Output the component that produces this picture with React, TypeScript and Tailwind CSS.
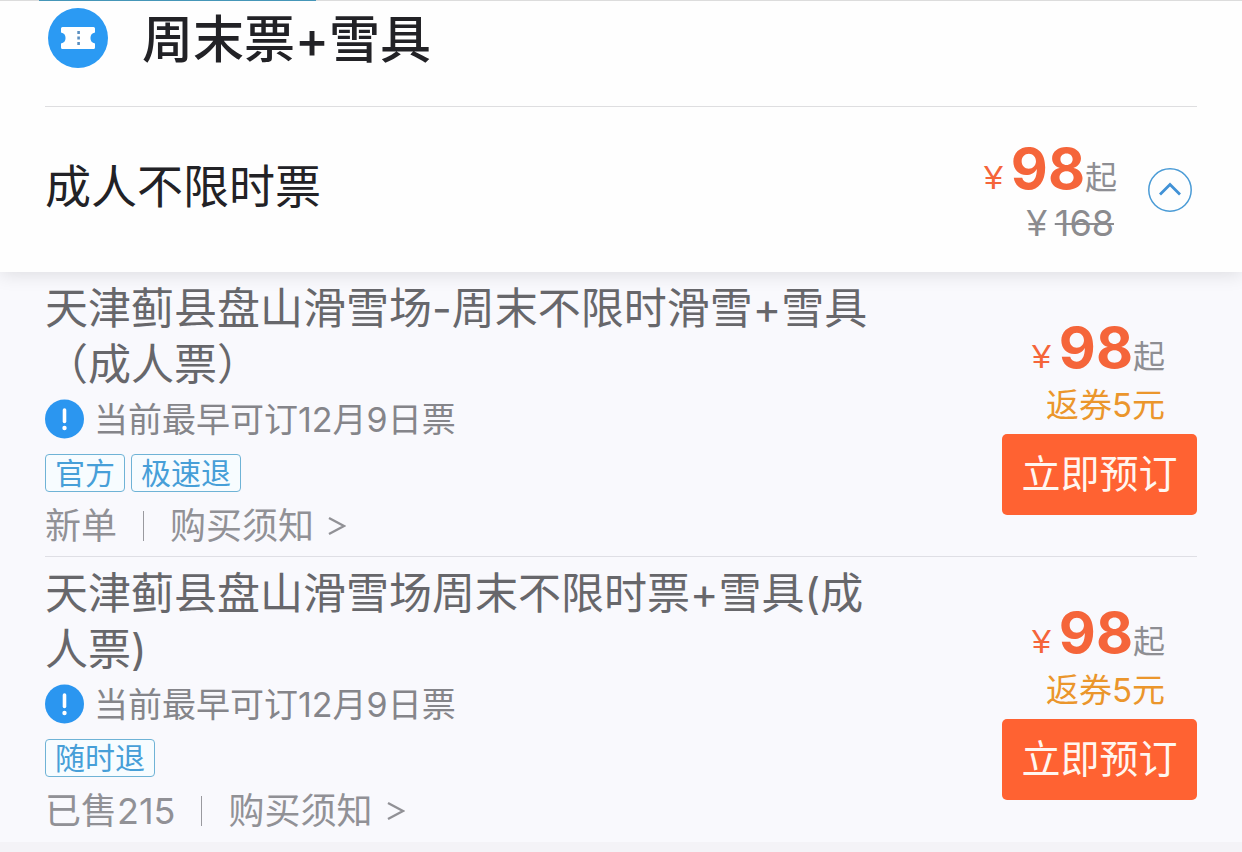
import React from "react";

type Offer = {
  title: string;
  tags: string[];
  status: string;
};

const offers: Offer[] = [
  {
    title: "天津蓟县盘山滑雪场-周末不限时滑雪+雪具（成人票）",
    tags: ["官方", "极速退"],
    status: "新单",
  },
  {
    title: "天津蓟县盘山滑雪场周末不限时票+雪具(成人票)",
    tags: ["随时退"],
    status: "已售215",
  },
];

function TicketIcon() {
  return (
    <svg viewBox="0 0 60 60" className="size-[60px] shrink-0" aria-hidden="true">
      <circle cx="30" cy="30" r="30" fill="#2b9af3" />
      <path
        d="M14.500 19H45.500Q47 19 47 20.500V24.500A5.600 5.600 0 0 0 47 35.500V39.500Q47 41 45.500 41H14.500Q13 41 13 39.500V35.500A5.600 5.600 0 0 0 13 24.500V20.500Q13 19 14.500 19Z"
        fill="#fff"
      />
      <g fill="#5b8fc0">
        <rect x="29.300" y="23" width="2.600" height="3" />
        <rect x="29.300" y="28.500" width="2.600" height="3" />
        <rect x="29.300" y="34" width="2.600" height="3" />
      </g>
    </svg>
  );
}

function InfoIcon() {
  return (
    <svg viewBox="0 0 40 40" className="size-10 shrink-0" aria-hidden="true">
      <circle cx="19.500" cy="20" r="19.500" fill="#2b96f0" />
      <path d="M19.500 11V22.500" stroke="#fff" strokeWidth="3.600" strokeLinecap="round" />
      <circle cx="19.500" cy="29" r="2.200" fill="#fff" />
    </svg>
  );
}

function Price({ amount }: { amount: number }) {
  return (
    <p className="flex h-14 items-baseline justify-end leading-[56px] text-[#f5653a]">
      <span className="mr-2 font-['Liberation_Sans',sans-serif] text-[34px]">¥</span>
      <strong className="text-[57px] font-bold">{amount}</strong>
      <span className="text-[32px] text-[#8e8e93]">起</span>
    </p>
  );
}

function OfferCard({ offer }: { offer: Offer }) {
  return (
    <li className="flex justify-between border-b border-[#dfdfe5] pt-2 pb-1 last:border-transparent">
      <div className="min-w-0 max-w-[850px]">
        <h3 className="text-[43px] leading-[56px] text-[#67676b]">{offer.title}</h3>
        <p className="flex h-[54px] items-center gap-[9px] text-[34px] text-[#85858a]">
          <InfoIcon />
          当前最早可订12月9日票
        </p>
        <ul className="flex h-[54px] items-center gap-[6px]">
          {offer.tags.map((tag) => (
            <li
              key={tag}
              className="flex h-[38px] items-center rounded border border-[#6fb3d6] bg-[#f7fcff] px-[9px] text-[30px] text-[#479fd8]"
            >
              {tag}
            </li>
          ))}
        </ul>
        <div className="flex h-[52px] items-center text-[36px] text-[#919196]">
          <span>{offer.status}</span>
          <span className="mx-[26px] h-[30px] w-px bg-[#9a9a9f]" />
          <a href="#notice" className="flex items-center gap-[14px]">
            购买须知
            <svg viewBox="0 0 18 20" className="h-5 w-[18px]" aria-hidden="true">
              <path d="M1 2L16 10L1 18" fill="none" stroke="#919196" strokeWidth="2.400" />
            </svg>
          </a>
        </div>
      </div>
      <div className="w-[195px] shrink-0 pt-10">
        <div className="pr-8">
          <Price amount={98} />
          <p className="text-right text-[33px] leading-[58px] text-[#eb962c]">返券5元</p>
        </div>
        <button
          type="button"
          className="flex h-[81px] w-full items-center justify-center rounded-[5px] bg-[#ff6232] text-[39px] text-[#fff6f0]"
        >
          立即预订
        </button>
      </div>
    </li>
  );
}

export default function App() {
  return (
    <main className="min-h-screen bg-[#f4f3f7] font-[Inter,'Noto_Sans_CJK_SC',sans-serif]" lang="zh-CN">
      <div className="relative bg-[#fefefe] shadow-[0_2px_18px_rgba(0,0,0,0.12)]">
        <div className="h-px bg-[#dcdcdc] pl-[39px]">
          <div className="h-px w-[277px] bg-[#4596b8]" />
        </div>
        <header className="mx-[45px] flex h-[106px] items-start gap-[34px] border-b border-[#dedee0] pt-[7px] pl-[3px]">
          <TicketIcon />
          <h1 className="text-[51px] leading-[64px] font-medium text-[#222226]">周末票+雪具</h1>
        </header>
        <section className="flex h-[165px] items-center justify-between pr-[50px] pl-[45px]">
          <h2 className="pb-2 text-[46px] leading-[64px] text-[#222226]">成人不限时票</h2>
          <div className="flex items-center gap-[31px]">
            <div>
              <div className="pt-2 pb-1">
                <Price amount={98} />
              </div>
              <p className="flex items-baseline justify-end gap-2 pr-[3px] text-[36px] leading-[44px] text-[#8b8b8e]">
                <span className="font-['Liberation_Sans',sans-serif]">¥</span>
                <del className="decoration-2">168</del>
              </p>
            </div>
            <button type="button" aria-label="收起" className="size-11">
              <svg viewBox="0 0 44 44" className="size-11" aria-hidden="true">
                <circle cx="22" cy="22" r="21.200" fill="none" stroke="#4a9bd6" strokeWidth="1.500" />
                <path d="M12 26.500L22 16.500L32 26.500" fill="none" stroke="#4192d6" strokeWidth="2.800" />
              </svg>
            </button>
          </div>
        </section>
      </div>
      <ul className="bg-[#f9f9fd] px-[45px]">
        {offers.map((offer) => (
          <OfferCard key={offer.title} offer={offer} />
        ))}
      </ul>
    </main>
  );
}
